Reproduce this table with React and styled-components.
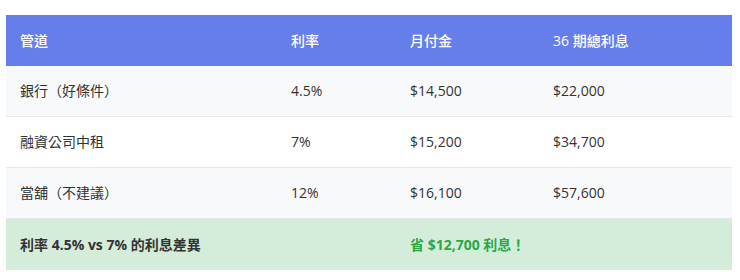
import React from "react";
import styled, { createGlobalStyle } from "styled-components";

const GlobalStyle = createGlobalStyle`
  body {
    margin: 0;
    background: #ffffff;
    font-family: "Open Sans", "Noto Sans CJK TC", sans-serif;
  }
`;

const columns = [
  { label: "管道", width: 271 },
  { label: "利率", width: 119 },
  { label: "月付金", width: 143 },
  { label: "36 期總利息", width: 193 }
];

const rows = [
  ["銀行（好條件）", "4.5%", "$14,500", "$22,000"],
  ["融資公司中租", "7%", "$15,200", "$34,700"],
  ["當舖（不建議）", "12%", "$16,100", "$57,600"]
];

const App = () => {
  return (
    <>
      <GlobalStyle />
      <Page>
        <Table>
          <colgroup>
            {columns.map(col => (
              <col key={col.label} style={{ width: col.width }} />
            ))}
          </colgroup>
          <thead>
            <tr>
              {columns.map(col => (
                <HeadCell key={col.label}>{col.label}</HeadCell>
              ))}
            </tr>
          </thead>
          <tbody>
            {rows.map(row => (
              <Row key={row[0]}>
                {row.map((cell, i) => (
                  <Cell key={i}>{cell}</Cell>
                ))}
              </Row>
            ))}
            <SummaryRow>
              <SummaryCell colSpan={2}>利率 4.5% vs 7% 的利息差異</SummaryCell>
              <SummaryCell colSpan={2} $green>
                省 $12,700 利息！
              </SummaryCell>
            </SummaryRow>
          </tbody>
        </Table>
      </Page>
    </>
  );
};

export default App;

const Page = styled.div`
  padding: 15px 8px 0 6px;
`;

const Table = styled.table`
  width: 726px;
  border-collapse: collapse;
  table-layout: fixed;
  font-size: 14px;
  color: #333333;
`;

const HeadCell = styled.th`
  background: #667eea;
  color: #ffffff;
  font-weight: 500;
  text-align: left;
  padding: 15px 14px;
  line-height: 21px;
`;

const Row = styled.tr`
  border-bottom: 1px solid #e6e8eb;
  &:nth-child(odd) {
    background: #f8f9fa;
  }
  &:nth-child(even) {
    background: #ffffff;
  }
`;

const Cell = styled.td`
  padding: 15px 14px;
  line-height: 20px;
`;

const SummaryRow = styled.tr`
  background: #d4edda;
`;

const SummaryCell = styled.td`
  padding: 15px 14px;
  line-height: 21px;
  font-weight: 700;
  color: ${props => (props.$green ? "#28a745" : "#333333")};
`;
